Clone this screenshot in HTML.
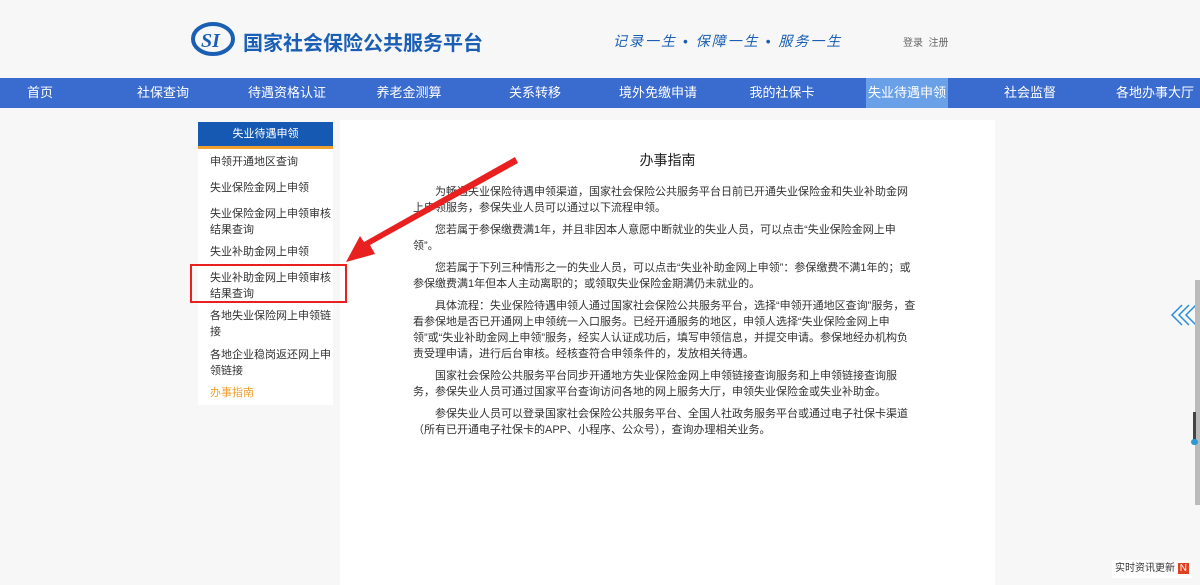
<!DOCTYPE html>
<html><head><meta charset="utf-8"><style>
body{margin:0;width:1200px;height:585px;overflow:hidden;background:#f7f7f7;font-family:"Liberation Sans","Noto Sans CJK SC",sans-serif;position:relative}
.a{position:absolute}
.nav{left:0;top:78px;width:1200px;height:30px;background:#3a6bcf}
.nav span{position:absolute;top:0;height:30px;line-height:30px;color:#fff;font-size:13px;width:124px;text-align:center}
.side{left:198px;top:122px;width:135px;height:283px;background:#fff}
.side .h{height:24px;background:#1559b3;border-bottom:3px solid #f0a030;color:#fff;font-size:11px;text-align:center;line-height:24px}
.side p{margin:0;position:absolute;left:12px;width:128px;font-size:11px;line-height:16px;color:#333}
.main{left:340px;top:120px;width:655px;height:465px;background:#fff}
.txt{left:413px;top:184px;width:505px;font-size:11px;line-height:16px;color:#333}
.txt p{margin:0 0 6px;text-indent:2em}
</style></head><body>
<svg class="a" style="left:190px;top:22px" width="46" height="34" viewBox="0 0 46 34"><ellipse cx="23" cy="17" rx="20" ry="15" fill="none" stroke="#1a5fb4" stroke-width="4"/><text x="11" y="25" font-size="20" font-weight="bold" font-style="italic" fill="#1a5fb4" font-family="Liberation Serif">SI</text></svg>
<div class="a" style="left:243px;top:27px;font-size:20px;font-weight:bold;color:#1a5fb4">国家社会保险公共服务平台</div>
<div class="a" style="left:613px;top:31px;font-size:14px;color:#1a5fb4;font-style:italic;letter-spacing:2px">记录一生 • 保障一生 • 服务一生</div>
<div class="a" style="left:903px;top:34px;font-size:10px;color:#666">登录&nbsp; 注册</div>
<div class="a nav">
<span style="left:-22px">首页</span><span style="left:101px">社保查询</span><span style="left:225px">待遇资格认证</span><span style="left:347px">养老金测算</span><span style="left:473px">关系转移</span><span style="left:596px">境外免缴申请</span><span style="left:720px">我的社保卡</span><span style="left:866px;width:82px;background:#6aa0e8">失业待遇申领</span><span style="left:968px">社会监督</span><span style="left:1093px">各地办事大厅</span>
</div>
<div class="a main"><div class="a" style="left:0;top:30px;width:655px;text-align:center;font-size:14px;color:#222">办事指南</div></div>
<div class="a side"><div class="h">失业待遇申领</div>
<p style="top:32px">申领开通地区查询</p>
<p style="top:58px">失业保险金网上申领</p>
<p style="top:84px">失业保险金网上申领审核结果查询</p>
<p style="top:122px">失业补助金网上申领</p>
<p style="top:148px">失业补助金网上申领审核结果查询</p>
<p style="top:186px">各地失业保险网上申领链接</p>
<p style="top:225px">各地企业稳岗返还网上申领链接</p>
<p style="top:263px;color:#f0a030">办事指南</p></div>
<div class="a txt">
<p>为畅通失业保险待遇申领渠道，国家社会保险公共服务平台日前已开通失业保险金和失业补助金网上申领服务，参保失业人员可以通过以下流程申领。</p>
<p>您若属于参保缴费满1年，并且非因本人意愿中断就业的失业人员，可以点击“失业保险金网上申领”。</p>
<p>您若属于下列三种情形之一的失业人员，可以点击“失业补助金网上申领”：参保缴费不满1年的；或参保缴费满1年但本人主动离职的；或领取失业保险金期满仍未就业的。</p>
<p>具体流程：失业保险待遇申领人通过国家社会保险公共服务平台，选择“申领开通地区查询”服务，查看参保地是否已开通网上申领统一入口服务。已经开通服务的地区，申领人选择“失业保险金网上申领”或“失业补助金网上申领”服务，经实人认证成功后，填写申领信息，并提交申请。参保地经办机构负责受理申请，进行后台审核。经核查符合申领条件的，发放相关待遇。</p>
<p>国家社会保险公共服务平台同步开通地方失业保险金网上申领链接查询服务和上申领链接查询服务，参保失业人员可通过国家平台查询访问各地的网上服务大厅，申领失业保险金或失业补助金。</p>
<p>参保失业人员可以登录国家社会保险公共服务平台、全国人社政务服务平台或通过电子社保卡渠道（所有已开通电子社保卡的APP、小程序、公众号），查询办理相关业务。</p>
</div>
<div class="a" style="left:190px;top:264px;width:153px;height:35px;border:2px solid #e82020"></div>
<svg class="a" style="left:0;top:0" width="1200" height="585"><polygon points="515,157 518,163 370,245 375,254 346,262 360,236 364,242" fill="#e82020"/>
<path d="M1182 305 l-10 10 l10 10 M1189 305 l-10 10 l10 10 M1196 305 l-10 10 l10 10" stroke="#2a8fd8" stroke-width="1.5" fill="none"/></svg>
<div class="a" style="left:1195px;top:280px;width:5px;height:225px;background:#bbb"></div>
<div class="a" style="left:1193px;top:412px;width:3px;height:30px;background:#444"></div>
<div class="a" style="left:1191px;top:439px;width:7px;height:6px;border-radius:4px;background:#2a9ad0"></div>
<div class="a" style="left:1112px;top:560px;width:80px;height:18px;background:#fff;font-size:10px;line-height:18px;color:#333;text-align:center;white-space:nowrap">实时资讯更新 <span style="background:#e04020;color:#fff;padding:0 2px">N</span></div>
</body></html>
